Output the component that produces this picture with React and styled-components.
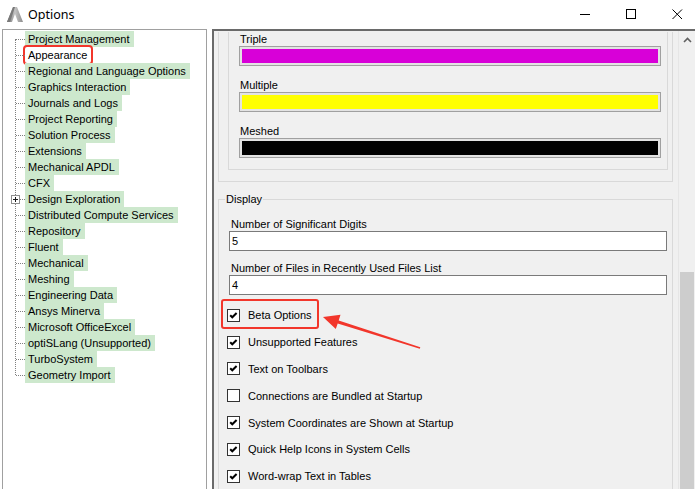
import React from "react";
import styled, { createGlobalStyle } from "styled-components";

const GlobalStyle = createGlobalStyle`
  html, body {
    margin: 0;
    padding: 0;
    background: #ffffff;
  }
  body {
    width: 700px;
    height: 489px;
    overflow: hidden;
    font-family: "Liberation Sans", Arial, sans-serif;
    color: #000;
  }
`;

const treeItems = [
  "Project Management",
  "Appearance",
  "Regional and Language Options",
  "Graphics Interaction",
  "Journals and Logs",
  "Project Reporting",
  "Solution Process",
  "Extensions",
  "Mechanical APDL",
  "CFX",
  "Design Exploration",
  "Distributed Compute Services",
  "Repository",
  "Fluent",
  "Mechanical",
  "Meshing",
  "Engineering Data",
  "Ansys Minerva",
  "Microsoft OfficeExcel",
  "optiSLang (Unsupported)",
  "TurboSystem",
  "Geometry Import",
];

const colorItems = [
  { label: "Triple", color: "#d800d8" },
  { label: "Multiple", color: "#ffff00" },
  { label: "Meshed", color: "#000000" },
];

const checkItems = [
  { label: "Beta Options", checked: true, marked: true },
  { label: "Unsupported Features", checked: true },
  { label: "Text on Toolbars", checked: true },
  { label: "Connections are Bundled at Startup", checked: false },
  { label: "System Coordinates are Shown at Startup", checked: true },
  { label: "Quick Help Icons in System Cells", checked: true },
  { label: "Word-wrap Text in Tables", checked: true },
];

const App = () => {
  return (
    <Window>
      <GlobalStyle />
      <TitleBar>
        <svg width="16" height="15" viewBox="0 0 16 15">
          <defs>
            <linearGradient id="ag" x1="0" y1="0" x2="1" y2="0">
              <stop offset="0" stopColor="#6f6f6f" />
              <stop offset="0.5" stopColor="#c4c4c4" />
              <stop offset="1" stopColor="#8c8c8c" />
            </linearGradient>
          </defs>
          <polygon points="0,15 6,0 10,0 16,15 11,15 8,7 5,15" fill="url(#ag)" />
          <polygon points="0,15 6,0 8,0 3,15" fill="#7a7a7a" />
        </svg>
        <Title>Options</Title>
        <Controls>
          <ControlButton>
            <svg width="11" height="11" viewBox="0 0 11 11">
              <line x1="0" y1="5.5" x2="10" y2="5.5" stroke="#000" strokeWidth="1" />
            </svg>
          </ControlButton>
          <ControlButton>
            <svg width="11" height="11" viewBox="0 0 11 11">
              <rect x="0.5" y="0.5" width="9" height="9" fill="none" stroke="#000" strokeWidth="1" />
            </svg>
          </ControlButton>
          <ControlButton>
            <svg width="11" height="11" viewBox="0 0 11 11">
              <path d="M0.5 0.5 L10 10 M10 0.5 L0.5 10" stroke="#000" strokeWidth="1" />
            </svg>
          </ControlButton>
        </Controls>
      </TitleBar>

      <Body>
        <TreePane>
          <TreeList>
            {treeItems.map((item, i) => (
              <TreeRow key={i}>
                {item === "Design Exploration" && (
                  <Expander viewBox="0 0 9 9">
                    <rect x="0.5" y="0.5" width="8" height="8" fill="#fff" stroke="#8e8e8e" />
                    <path d="M2 4.5 H7 M4.5 2 V7" stroke="#1a1a1a" strokeWidth="1" />
                  </Expander>
                )}
                <TreeLabel $marked={item === "Appearance"}>{item}</TreeLabel>
              </TreeRow>
            ))}
          </TreeList>
        </TreePane>

        <SettingsPane>
          <ContentArea>
            <OuterGroup>
              <InnerGroup>
                {colorItems.map((c) => (
                  <ColorItem key={c.label}>
                    <FieldLabel>{c.label}</FieldLabel>
                    <Swatch>
                      <SwatchFill $color={c.color} />
                    </Swatch>
                  </ColorItem>
                ))}
              </InnerGroup>
            </OuterGroup>

            <DisplayGroup>
              <Legend>Display</Legend>
              <FieldLabel $indent>Number of Significant Digits</FieldLabel>
              <TextBox>5</TextBox>
              <FieldLabel $indent $gap>
                Number of Files in Recently Used Files List
              </FieldLabel>
              <TextBox>4</TextBox>
              <CheckList>
                {checkItems.map((c) => (
                  <CheckRow key={c.label} $marked={c.marked}>
                    <CheckBox>
                      {c.checked && (
                        <svg width="11" height="11" viewBox="0 0 11 11">
                          <path
                            d="M2.2 5.2 L4.3 7.3 L8.6 3"
                            fill="none"
                            stroke="#000"
                            strokeWidth="2"
                          />
                        </svg>
                      )}
                    </CheckBox>
                    <CheckLabel>{c.label}</CheckLabel>
                  </CheckRow>
                ))}
              </CheckList>
            </DisplayGroup>
          </ContentArea>

          <ScrollBar>
            <ScrollArrow>
              <svg width="9" height="6" viewBox="0 0 9 6">
                <path d="M1 5 L4.5 1.5 L8 5" fill="none" stroke="#606060" strokeWidth="1.6" />
              </svg>
            </ScrollArrow>
            <ScrollTrack>
              <ScrollThumb />
            </ScrollTrack>
          </ScrollBar>
        </SettingsPane>
      </Body>

      <Annotation viewBox="0 0 700 489">
        <polygon
          points="323,317 340.5,314.8 338.7,320.4 420.3,347.2 419.8,348.8 337.7,323.4 335.8,329"
          fill="#f2362b"
        />
      </Annotation>
    </Window>
  );
};

export default App;

const Window = styled.div`
  position: relative;
  width: 700px;
  height: 489px;
  overflow: hidden;
  background: #ffffff;
  display: flex;
  flex-direction: column;
`;

const TitleBar = styled.div`
  flex: none;
  height: 29px;
  display: flex;
  align-items: center;
  padding-left: 7px;
`;

const Title = styled.span`
  margin-left: 5px;
  font-family: "Noto Sans", "Open Sans", sans-serif;
  font-size: 12.5px;
  color: #000;
`;

const Controls = styled.div`
  margin-left: auto;
  display: flex;
  align-self: stretch;
`;

const ControlButton = styled.div`
  width: 46px;
  display: flex;
  align-items: center;
  justify-content: center;
`;

const Body = styled.div`
  flex: 1;
  min-height: 0;
  display: flex;
  padding-left: 2px;
  gap: 5px;
`;

const TreePane = styled.div`
  flex: none;
  width: 205px;
  box-sizing: border-box;
  border: 1px solid #a0a0a0;
  border-bottom: none;
  background: #fff;
  padding-top: 1px;
`;

const TreeList = styled.div`
  position: relative;
  &::before {
    content: "";
    position: absolute;
    left: 12px;
    top: 8px;
    bottom: 8px;
    border-left: 1px dotted #808080;
  }
`;

const TreeRow = styled.div`
  position: relative;
  height: 16px;
  padding-left: 22px;
  display: flex;
  align-items: center;
  &::before {
    content: "";
    position: absolute;
    left: 13px;
    top: 8px;
    width: 9px;
    border-top: 1px dotted #808080;
  }
`;

const Expander = styled.svg`
  position: absolute;
  left: 8px;
  top: 4px;
  width: 9px;
  height: 9px;
  z-index: 1;
`;

const TreeLabel = styled.span`
  display: block;
  height: 16px;
  line-height: 16px;
  padding: 0 4px 0 3px;
  font-size: 11px;
  white-space: nowrap;
  background: ${(p) => (p.$marked ? "#ffffff" : "#cde8cd")};
  outline: ${(p) => (p.$marked ? "2px solid #f2362b" : "none")};
  border-radius: ${(p) => (p.$marked ? "2px" : "0")};
`;

const SettingsPane = styled.div`
  flex: none;
  width: 483px;
  box-sizing: border-box;
  border-top: 2px solid #6a6a6a;
  border-left: 2px solid #6a6a6a;
  background: #f0f0f0;
  display: flex;
`;

const ContentArea = styled.div`
  flex: 1;
  min-width: 0;
  padding: 1px 5px 0 4px;
`;

const OuterGroup = styled.div`
  border: 1px solid #d9d9d9;
  border-top: none;
  padding: 0 4px 11px 9px;
`;

const InnerGroup = styled.div`
  border: 1px solid #d9d9d9;
  border-top: none;
  padding: 0 6px 11px 10px;
  display: flex;
  flex-direction: column;
  gap: 12px;
`;

const ColorItem = styled.div`
  display: flex;
  flex-direction: column;
`;

const FieldLabel = styled.div`
  font-size: 11px;
  line-height: ${(p) => (p.$indent ? "13px" : "14px")};
  margin-left: ${(p) => (p.$indent ? "2px" : "1px")};
  margin-top: ${(p) => (p.$gap ? "11px" : "0")};
  white-space: nowrap;
`;

const Swatch = styled.div`
  height: 20px;
  box-sizing: border-box;
  border: 1px solid #a0a0a0;
  padding: 2px;
  background: #e3e3e3;
`;

const SwatchFill = styled.div`
  height: 100%;
  background: ${(p) => p.$color};
`;

const DisplayGroup = styled.fieldset`
  margin: 10px 0 0 0;
  padding: 12px 5px 0 10px;
  border: 1px solid #d9d9d9;
  border-bottom: none;
  min-width: 0;
`;

const Legend = styled.legend`
  margin-left: -4px;
  padding: 0 1px;
  font-size: 11px;
  line-height: 14px;
`;

const TextBox = styled.div`
  height: 20px;
  box-sizing: border-box;
  border: 1px solid #7a7a7a;
  background: #fff;
  padding-left: 2px;
  font-size: 11px;
  line-height: 18px;
`;

const CheckList = styled.div`
  margin-top: 7px;
  margin-left: -2px;
`;

const CheckRow = styled.div`
  position: relative;
  height: 26.8px;
  display: flex;
  align-items: center;
  gap: 8px;
  &::after {
    content: "";
    display: ${(p) => (p.$marked ? "block" : "none")};
    position: absolute;
    left: -6px;
    top: -3px;
    width: 98px;
    height: 30px;
    box-sizing: border-box;
    border: 2px solid #f2362b;
    border-radius: 3px;
  }
`;

const CheckBox = styled.div`
  width: 13px;
  height: 13px;
  box-sizing: border-box;
  border: 1px solid #333;
  background: #fff;
  display: flex;
  align-items: center;
  justify-content: center;
`;

const CheckLabel = styled.span`
  font-size: 11px;
  white-space: nowrap;
`;

const ScrollBar = styled.div`
  flex: none;
  width: 16px;
  display: flex;
  flex-direction: column;
  border-left: 1px solid #e6e6e6;
`;

const ScrollArrow = styled.div`
  height: 17px;
  display: flex;
  align-items: center;
  justify-content: center;
`;

const ScrollTrack = styled.div`
  flex: 1;
  padding: 224px 1px 0 1px;
`;

const ScrollThumb = styled.div`
  height: 100%;
  background: #cdcdcd;
`;

const Annotation = styled.svg`
  position: absolute;
  left: 0;
  top: 0;
  width: 700px;
  height: 489px;
  pointer-events: none;
`;
